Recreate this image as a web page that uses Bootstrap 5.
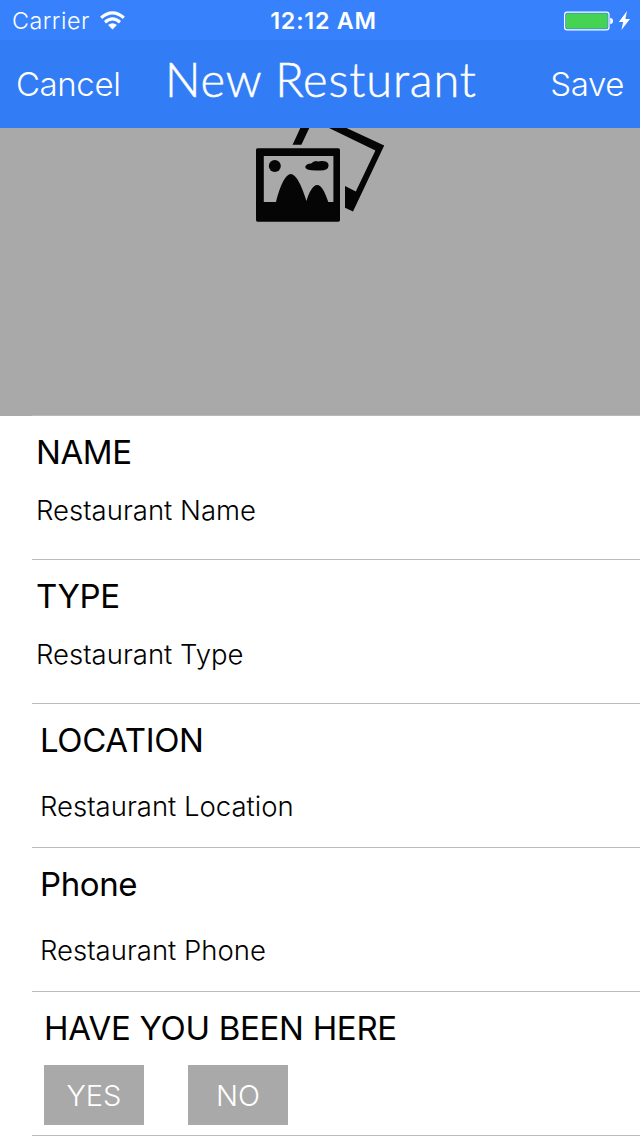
<!DOCTYPE html>
<html lang="en">
<head>
<meta charset="utf-8">
<meta name="viewport" content="width=device-width, initial-scale=1">
<title>New Resturant</title>
<link href="https://cdn.jsdelivr.net/npm/bootstrap@5.3.0/dist/css/bootstrap.min.css" rel="stylesheet">
<style>
  body { font-family: Inter, "Liberation Sans", sans-serif; color: #000; background: #fff; white-space: nowrap; overflow: hidden; }
  .status-bar { height: 40px; background: #3781fc; font-size: 23.3px; line-height: 42px; padding-left: 12px; }
  .carrier-name { font-weight: 300; letter-spacing: .5px; }
  .wifi { margin-left: 10px; }
  .clock { font-weight: 600; letter-spacing: .75px; padding-right: 5px; margin-left: 0; }
  .title-bar { height: 88px; background: #327cf5; color: #fff; padding: 0 16px; }
  .bar-link { font-weight: 300; font-size: 33px; line-height: 40px; letter-spacing: -.4px; margin-top: 24px; color: #fff; text-decoration: none; }
  .screen-title { font-family: Lato, "Open Sans", sans-serif; font-weight: 300; font-size: 47px; line-height: 56px; margin: 11px 29px 0 0; letter-spacing: .85px; -webkit-text-stroke: .5px #fff; }
  .photo { height: 288px; background: #a9a9a9; }
  .photo::after { content: ""; display: block; height: 1px; margin-left: 32px; background: #b9b9b9; }
  .form-row { height: 144px; margin-left: 32px; padding: 16px 0 0 4px; border-bottom: 1px solid #bcbcbe; }
  .form-row.inset { padding-left: 8px; }
  .form-row.choices { padding-left: 12px; }
  .form-title { font-size: 33px; line-height: 40px; font-weight: 400; letter-spacing: -.4px; }
  .choices .form-title { letter-spacing: -.29px; }
  .form-value { font-size: 27.5px; line-height: 40px; font-weight: 300; margin-top: 18px; }
  .inset .form-value { margin-top: 26px; }
  .choice-group { gap: 44px; margin-top: 17px; }
  .choice { width: 100px; height: 60px; border-radius: 0; background: #a9a9a9; color: #fff; font-weight: 300; font-size: 29px; line-height: 62px; padding: 0; border: 0; }
</style>
</head>
<body>
<header>
  <div class="status-bar text-white">
    <div class="row g-0">
    <div class="col d-flex align-items-center">
      <span class="carrier-name">Carrier</span>
      <svg class="wifi" width="25" height="20" viewBox="0 0 26 20" preserveAspectRatio="none" fill="none" stroke="#fff" stroke-width="3.2">
        <path d="M1.2 6.8Q13 -3.2 24.8 6.8M5.2 11.2Q13 4.6 20.8 11.2"/>
        <path d="M8.4 14Q13 10.6 17.6 14L13 18.6Z" fill="#fff" stroke="none"/>
      </svg>
    </div>
    <div class="col-auto clock">12:12 AM</div>
    <div class="col d-flex align-items-center justify-content-end">
      <svg width="76" height="24" viewBox="564 8.5 76 24">
        <rect x="564.6" y="11.6" width="44.4" height="17.8" rx="2.6" fill="none" stroke="#fff" stroke-width="1.2"/>
        <rect x="566" y="13" width="41.6" height="15" rx="1.4" fill="#45d353"/>
        <path d="M610.2 17.2Q613 17.8 613 20.5T610.2 23.8Z" fill="#fff"/>
        <path d="M627 10.4L618.8 21.4H623.2L621.4 29.4L630 18.4H625.4Z" fill="#fff"/>
      </svg>
    </div>
    </div>
  </div>
  <nav class="title-bar d-flex justify-content-between align-items-start">
    <a class="bar-link" href="#">Cancel</a>
    <h1 class="screen-title">New Resturant</h1>
    <a class="bar-link" href="#">Save</a>
  </nav>
</header>
<main>
  <div class="photo d-flex flex-column justify-content-between">
    <svg class="align-self-center" width="160" height="110" viewBox="240 128 160 110">
      <path d="M300.3 128H309.3L301.4 144.8H292.6ZM329 128H346.5L384.2 145.6L353 211.4L345 207.8V186L355.8 191.4L375.4 150.6Z" fill="#050505"/>
      <path fill-rule="evenodd" fill="#050505" d="M257.5 148.2H338.3Q340 148.2 340 150V220Q340 221.8 338.3 221.8H257.5Q256 221.8 256 220V150Q256 148.2 257.5 148.2ZM263.8 156V202H276C279.5 188 285 174 290.8 174S302.5 188 306.5 201C309 192 313 185 317.2 185S325 192 328.3 202H333.4V156Z"/>
      <circle cx="274.8" cy="166" r="6" fill="#050505"/>
      <path d="M305.2 167Q306 164 311.2 163.6Q314 160 318 161.4Q328.5 160 328.6 165.6Q328.4 171 319 170.5Q305.5 171 305.2 167Z" fill="#050505"/>
    </svg>
  </div>
  <section class="form-row">
    <div class="form-title">NAME</div>
    <div class="form-value">Restaurant Name</div>
  </section>
  <section class="form-row">
    <div class="form-title">TYPE</div>
    <div class="form-value">Restaurant Type</div>
  </section>
  <section class="form-row inset">
    <div class="form-title">LOCATION</div>
    <div class="form-value">Restaurant Location</div>
  </section>
  <section class="form-row inset">
    <div class="form-title">Phone</div>
    <div class="form-value">Restaurant Phone</div>
  </section>
  <section class="form-row choices">
    <div class="form-title">HAVE YOU BEEN HERE</div>
    <div class="choice-group d-flex">
      <button type="button" class="btn choice">YES</button>
      <button type="button" class="btn choice">NO</button>
    </div>
  </section>
</main>
<script src="https://cdn.jsdelivr.net/npm/bootstrap@5.3.0/dist/js/bootstrap.bundle.min.js"></script>
</body>
</html>
